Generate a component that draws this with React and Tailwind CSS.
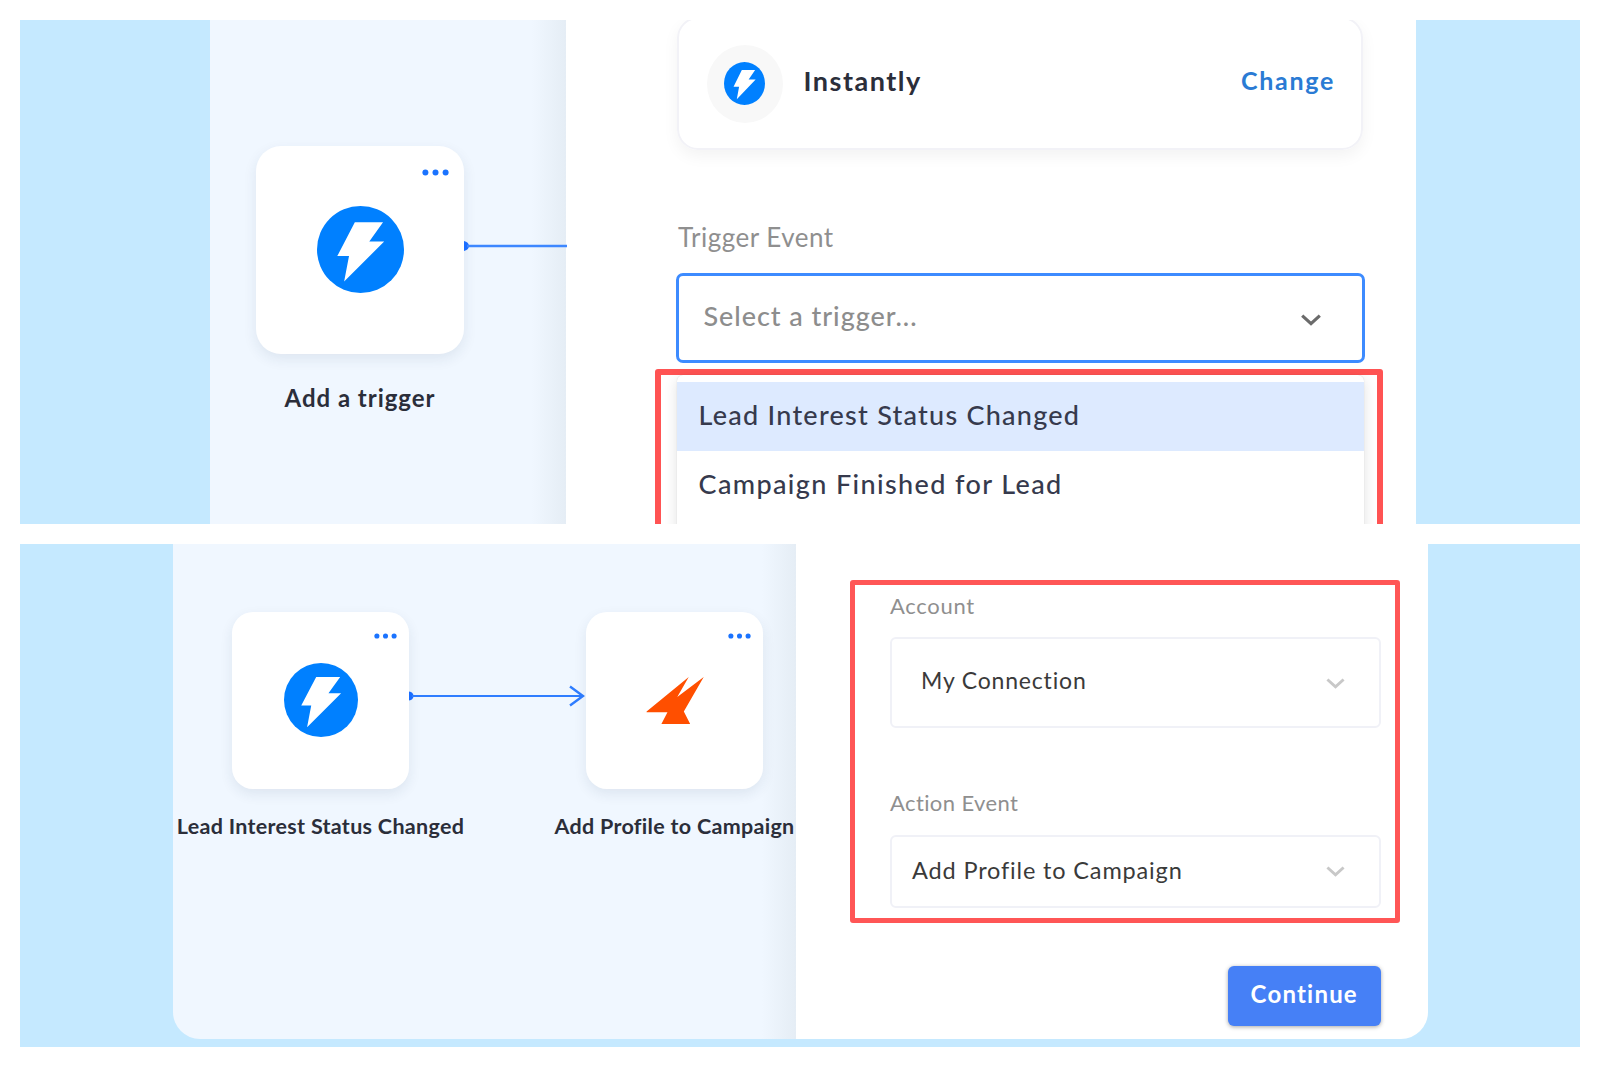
import React from 'react';

function InstantlyLogo({ className }) {
  return (
    <svg viewBox="0 0 100 100" preserveAspectRatio="none" className={className}>
      <circle cx="50" cy="50" r="50" fill="#0080ff" />
      <path d="M43.5 18.8H75.9L60.1 40.9H77.2L31.2 86.7L36.8 57.6H23.3Z" fill="#fff" />
    </svg>
  );
}

function ReplyLogo({ className }) {
  return (
    <svg viewBox="0 0 60 50" className={className}>
      <path d="M0.5 36.2L43.5 1L31.8 21.5L58.8 1L38.5 36.2L45 49H15.6L21.8 37H0.5Z" fill="#ff4f00" />
    </svg>
  );
}

function Chevron({ className }) {
  return (
    <svg viewBox="0 0 20 12" fill="none" stroke="currentColor" className={className}>
      <path d="M1.2 1.6L10 9.6L18.8 1.6" strokeWidth="3.2" />
    </svg>
  );
}

function Dots({ className }) {
  return (
    <svg viewBox="0 0 27 7" fill="#1a73ff" className={className}>
      <circle cx="3.4" cy="3.5" r="3" />
      <circle cx="13.5" cy="3.5" r="3" />
      <circle cx="23.6" cy="3.5" r="3" />
    </svg>
  );
}

function TriggerPanel() {
  return (
    <section className="flex h-[503.5px] overflow-hidden bg-[#c5e9ff]">
      <div className="relative ml-[190px] w-[356px] shrink-0 bg-[#f0f7ff]">
        <div className="absolute inset-y-0 right-0 w-[34px] bg-linear-to-r from-[#f0f7ff] to-[#e5edf5]" />

        <div className="absolute left-[45.5px] top-[126px] flex h-[208px] w-[208px] items-center justify-center rounded-[25px] bg-white shadow-[0_5px_14px_rgba(30,60,90,0.09)]">
          <Dots className="absolute right-[15px] top-[23px] h-[7px] w-[27px]" />
          <InstantlyLogo className="mb-[2px] ml-px h-[87px] w-[87px]" />
        </div>
        <svg viewBox="0 0 104 12" className="absolute left-[253.5px] top-[220px] h-3 w-[103px]">
          <path d="M0 1C3 1.6 5 3.4 5 6S3 10.4 0 11Z" fill="#1a6dff" />
          <path d="M3 6H104" stroke="#3d87ff" strokeWidth="2.7" />
        </svg>
        <div className="absolute left-[45.5px] top-[363.5px] w-[209px] whitespace-nowrap text-center text-[24px] font-bold leading-[28px] tracking-[0.97px] text-[#2b2e3a]">
          Add a trigger
        </div>
      </div>

      <div className="flex w-[850px] shrink-0 flex-col bg-white pl-[109.5px] pr-[51px]">
        <div className="-mt-[3px] ml-px mr-[2px] flex h-[133px] shrink-0 items-center rounded-[21px] border-2 border-[#f2f2f7] pl-[28px] pr-[26px] shadow-[0_6px_16px_rgba(0,0,0,0.05)]">
          <div className="flex h-[78px] w-[76px] items-center justify-center rounded-[50%] bg-[#f8f8f8]">
            <InstantlyLogo className="h-[43px] w-[41px]" />
          </div>
          <div className="-mt-1.5 ml-[21px] text-[27px] font-bold leading-8 tracking-[1.5px] text-[#2b2e3a]">Instantly</div>
          <div className="-mt-2 ml-auto text-[25px] font-bold leading-8 tracking-[1.7px] text-[#2a7bd4]">Change</div>
        </div>

        <div className="ml-[2.5px] mt-[71px] text-[26px] leading-8 tracking-[0.5px] text-[#8f8f8f]">Trigger Event</div>

        <div className="mt-[19.5px] flex h-[90.5px] shrink-0 items-center justify-between rounded-[7px] border-3 border-[#3d8bff] pl-[25px] pr-[41px]">
          <span className="pb-[3px] text-[27px] font-medium leading-8 tracking-[0.95px] text-[#8d8d8d]">Select a trigger...</span>
          <Chevron className="mt-[4px] h-3 w-5 text-[#6b6b6b]" />
        </div>

        <div className="-ml-[21px] -mr-[18px] mt-[6px] h-[170px] shrink-0 rounded-[3px] border-[6.5px] border-[#ff5353] pl-4 pr-[13px]">
          <div className="h-[170px] rounded-t-[6px] bg-white pt-[6.5px] shadow-[0_4px_14px_rgba(0,0,0,0.12),0_0_1px_rgba(0,0,0,0.2)]">
            <div className="flex h-[69px] items-center bg-[#ddeaff] pb-[3px] pl-[22px] text-[27px] font-medium leading-8 tracking-[1.25px] text-[#363a4d]">
              Lead Interest Status Changed
            </div>
            <div className="flex h-[69px] items-center pb-[3px] pl-[22px] text-[27px] font-medium leading-8 tracking-[1.38px] text-[#363a4d]">
              Campaign Finished for Lead
            </div>
          </div>
        </div>
      </div>
    </section>
  );
}

function FlowNode({ label, className, children }) {
  return (
    <div className={`absolute flex flex-col items-center ${className}`}>
      <div className="relative flex h-[177px] w-[177px] items-center justify-center rounded-[21px] bg-white shadow-[0_5px_13px_rgba(30,60,90,0.09)]">
        <Dots className="absolute right-[12.5px] top-[21px] h-[6px] w-[23px]" />
        {children}
      </div>
      <div className="mt-[24px] whitespace-nowrap text-[21.5px] font-bold leading-[26px] tracking-[0.3px] text-[#2b2e3a]">{label}</div>
    </div>
  );
}

function ActionPanel() {
  return (
    <section className="flex h-[503.5px] bg-[#c5e9ff] pb-[8px] pl-[152.5px] pr-[152px]">
      <div className="flex flex-1 overflow-hidden rounded-b-[27px]">
        <div className="relative w-[623.5px] shrink-0 bg-[#f0f7ff]">
          <div className="absolute inset-y-0 right-0 w-[34px] bg-linear-to-r from-[#f0f7ff] to-[#e5edf5]" />
          <FlowNode label="Lead Interest Status Changed" className="left-[4px] top-[68px] w-[288px]">
            <InstantlyLogo className="h-[74px] w-[74px]" />
          </FlowNode>
          <svg viewBox="0 0 176 24" fill="none" className="absolute left-[236.5px] top-[140.5px] h-6 w-[176px]">
            <path d="M0 7.5C3 8 4.5 9.8 4.5 12S3 16 0 16.5Z" fill="#1a6dff" />
            <path d="M3 12H173" stroke="#2f7dff" strokeWidth="2.1" />
            <path d="M161 2.5L174 12L161 21.5" stroke="#2f7dff" strokeWidth="2.4" />
          </svg>
          <FlowNode label="Add Profile to Campaign" className="left-[381px] top-[68px] w-[242px]">
            <ReplyLogo className="ml-px h-[49px] w-[59px]" />
          </FlowNode>
        </div>

        <div className="flex flex-1 flex-col bg-white pl-[54px] pr-[28.5px] pt-[36.5px]">
          <div className="flex h-[343px] flex-col rounded-[3px] border-5 border-[#ff5656] pl-[35px] pr-[14px]">
            <div className="mt-[6.5px] text-[22px] leading-7 tracking-[0.7px] text-[#8f8f8f]">Account</div>
            <div className="mt-[17px] flex h-[91px] shrink-0 items-center justify-between rounded-md border-2 border-[#f0f1f7] pl-[29px] pr-[34px]">
              <span className="pb-[4px] text-[23px] leading-7 tracking-[0.82px] text-[#3a3a3a]">My Connection</span>
              <Chevron className="mt-[3px] h-[11px] w-[19px] text-[#c8c8c8]" />
            </div>
            <div className="mt-[61.5px] text-[22px] leading-7 tracking-[0.4px] text-[#8f8f8f]">Action Event</div>
            <div className="mt-[17.5px] flex h-[73px] shrink-0 items-center justify-between rounded-md border-2 border-[#f0f1f7] pl-[20px] pr-[34px]">
              <span className="pb-[3px] text-[23.5px] leading-7 tracking-[0.85px] text-[#3a3a3a]">Add Profile to Campaign</span>
              <Chevron className="h-[11px] w-[19px] text-[#c8c8c8]" />
            </div>
          </div>
          <button className="mr-[18.5px] mt-[43px] h-[60px] w-[153.5px] self-end rounded-[6px] bg-[#4680f6] pb-[5px] text-[24px] font-bold leading-7 tracking-[1.2px] text-white shadow-[0_1px_4px_rgba(0,0,0,0.35)]">
            Continue
          </button>
        </div>
      </div>
    </section>
  );
}

export default function App() {
  return (
    <div className="flex h-[1067px] w-[1600px] flex-col gap-5 bg-white p-5 font-['Lato',sans-serif]">
      <TriggerPanel />
      <ActionPanel />
    </div>
  );
}
